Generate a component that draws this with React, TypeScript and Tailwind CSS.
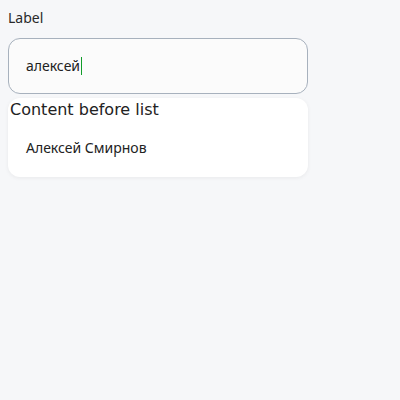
const App = () => {
  return (
    <div className="min-h-[400px] w-[400px] bg-[#f6f7f9] p-2 font-['Noto_Sans',sans-serif]">
      <div className="w-[300px]">
        <label className="block pt-[2px] text-[14px] leading-[16px] text-[#2a2a2a]">Label</label>
        <div className="mt-[12px] flex h-[56px] items-center rounded-[12px] border border-[#a7b1bd] bg-[#fbfbfb] px-[17px]">
          <span className="text-[14px] leading-[18px] text-[#222]">алексей</span>
          <span className="ml-[1px] h-[18px] w-[1px] bg-[#119c2a]" />
        </div>
        <div className="mt-[4px] h-[79px] rounded-[12px] bg-white shadow-[0_1px_4px_rgba(0,0,0,0.06)]">
          <div className="pl-[2px] pt-[2px] font-['DejaVu_Sans',sans-serif] text-[16px] leading-[20px] text-[#222]">
            Content before list
          </div>
          <div className="px-[18px] pt-[19px] text-[14px] leading-[18px] text-[#222]">Алексей Смирнов</div>
        </div>
      </div>
    </div>
  );
};

export default App;
